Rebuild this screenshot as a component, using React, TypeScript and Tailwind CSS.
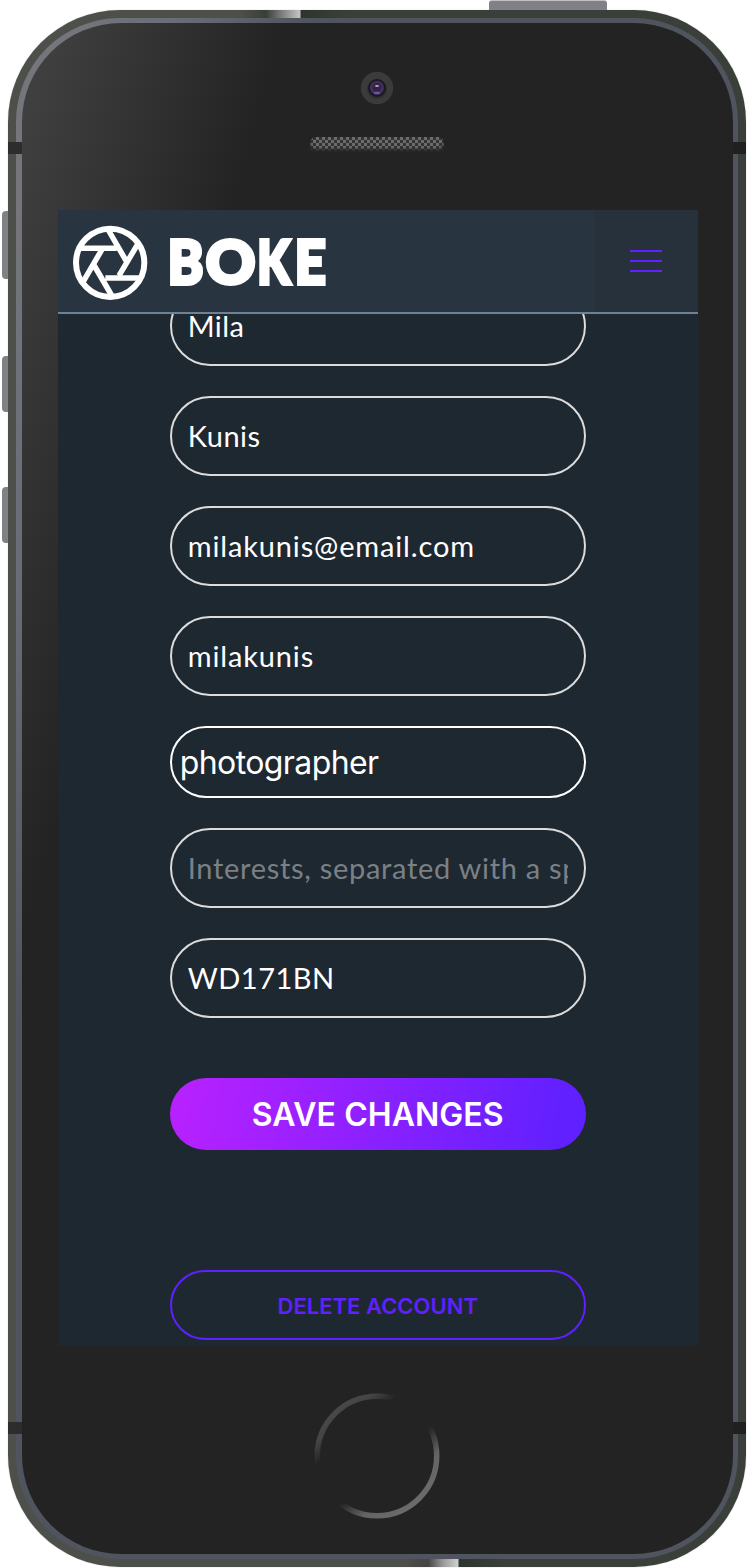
import React from "react";

function Logo() {
  return (
    <svg viewBox="24 30 840 306" className="h-[102px] w-[280px] shrink-0" aria-label="Boke">
      <g fill="none" stroke="#fff" strokeWidth="18">
        <circle cx="180.500" cy="188.500" r="102.500" />
        <path strokeWidth="16.500" d="M92 144.500H200M175 90L231 187M264 131L207 227M270 234H166M186 288L130 192M98 248L156 148" />
      </g>
      <g fill="#fff" stroke="#fff" strokeWidth="12" fontFamily="Lato, sans-serif" fontWeight="900" fontSize="183">
        <text x="353" y="252" textLength="107" lengthAdjust="spacingAndGlyphs">B</text>
        <text x="467" y="252" textLength="149" lengthAdjust="spacingAndGlyphs">O</text>
        <text x="622" y="252" textLength="99" lengthAdjust="spacingAndGlyphs">K</text>
        <text x="734" y="252" textLength="93" lengthAdjust="spacingAndGlyphs">E</text>
      </g>
    </svg>
  );
}

function Header() {
  return (
    <header className="relative z-10 flex h-[104px] shrink-0 items-center justify-between border-b-2 border-[#6f8294] bg-[linear-gradient(90deg,#28343f_0,#28343f_536px,#26313c_536px)] pr-9">
      <Logo />
      <button className="flex h-[22px] w-8 flex-col justify-between" aria-label="Menu">
        <span className="h-0.5 w-full bg-[#6020ff]" />
        <span className="h-0.5 w-full bg-[#6020ff]" />
        <span className="h-0.5 w-full bg-[#6020ff]" />
      </button>
    </header>
  );
}

function Field({ text, track, muted }: { text: string; track: string; muted?: boolean }) {
  return (
    <div className="flex h-20 shrink-0 items-center rounded-full border-2 border-[#dcdcdc] px-4 pb-px">
      <span
        className={`w-full overflow-hidden whitespace-nowrap font-[Lato,sans-serif] text-[29px] leading-10 ${track} ${muted ? "text-[#7b8085]" : "text-white"}`}
      >
        {text}
      </span>
    </div>
  );
}

function ProfileForm() {
  return (
    <main className="flex-1 overflow-hidden px-28">
      <form className="-mt-7 flex flex-col gap-[30px]">
        <Field text="Mila" track="tracking-[0.4px]" />
        <Field text="Kunis" track="tracking-[0.5px]" />
        <Field text="milakunis@email.com" track="tracking-[0.85px]" />
        <Field text="milakunis" track="tracking-[0.85px]" />
        <div className="flex h-[72px] items-center rounded-full border-2 border-white px-2 pt-0.5 font-[Inter,sans-serif] text-[32px] tracking-[-0.6px] text-white">
          photographer
        </div>
        <Field text="Interests, separated with a space" track="tracking-[0.7px]" muted />
        <Field text="WD171BN" track="tracking-[0.5px]" />
        <button
          type="button"
          className="mt-[30px] h-[72px] rounded-full bg-[linear-gradient(100deg,#b721ff_3%,#6020ff_95%)] pt-0.5 font-[Inter,sans-serif] text-[32px] font-semibold tracking-[0.05px] text-white"
        >
          SAVE CHANGES
        </button>
        <button
          type="button"
          className="mt-[90px] h-[70px] rounded-full border-2 border-[#6020ff] pt-0.5 font-[Inter,sans-serif] text-[22px] font-semibold tracking-[0.02px] text-[#6020ff]"
        >
          DELETE ACCOUNT
        </button>
      </form>
    </main>
  );
}

function Camera() {
  return (
    <svg viewBox="0 0 34 34" className="h-[34px] w-[34px]">
      <defs>
        <radialGradient id="lens" cx="50%" cy="45%" r="55%">
          <stop offset="0" stopColor="#2b2038" />
          <stop offset="0.5" stopColor="#35254b" />
          <stop offset="0.8" stopColor="#49326b" />
          <stop offset="1" stopColor="#2c2040" />
        </radialGradient>
      </defs>
      <circle cx="17" cy="17" r="16.200" fill="#3b3b3b" />
      <circle cx="17" cy="18" r="10" fill="#303030" />
      <circle cx="17" cy="17" r="9" fill="#1c1a20" />
      <circle cx="17" cy="17" r="7" fill="url(#lens)" />
      <ellipse cx="17" cy="22" rx="3.200" ry="1.300" fill="#70559a" />
      <ellipse cx="17" cy="15" rx="2" ry="1" fill="#b5a9c2" />
    </svg>
  );
}

function HomeButton() {
  return (
    <svg viewBox="0 0 126 126" className="h-[126px] w-[126px]">
      <defs>
        <linearGradient id="home" gradientUnits="userSpaceOnUse" x1="22.700" y1="15.900" x2="103.300" y2="110.100">
          <stop offset="0" stopColor="#484848" />
          <stop offset="0.1" stopColor="#444444" />
          <stop offset="0.24" stopColor="#232323" />
          <stop offset="0.6" stopColor="#232323" />
          <stop offset="0.8" stopColor="#646464" />
          <stop offset="1" stopColor="#6b6b6b" />
        </linearGradient>
      </defs>
      <circle cx="63" cy="63" r="59.700" fill="none" stroke="url(#home)" strokeWidth="5.500" />
    </svg>
  );
}

export default function App() {
  return (
    <div className="relative h-[1568px] w-[748px] overflow-hidden bg-white pl-2 pt-2.5">
      <div className="absolute left-[489px] top-0 h-4 w-[118px] rounded-t-[3px] border-t border-[#c2c2c2] bg-[#818087]" />
      <div className="absolute left-[1.500px] top-[210.500px] h-[68px] w-3 rounded-l-[4px] bg-[#818087]" />
      <div className="absolute left-[1.500px] top-[356px] h-[56px] w-3 rounded-l-[4px] bg-[#818087]" />
      <div className="absolute left-[1.500px] top-[487px] h-[56px] w-3 rounded-l-[4px] bg-[#818087]" />

      <div className="relative h-[1557px] w-[738px] rounded-[112px] bg-[linear-gradient(90deg,#4d4f4a_0,#4d4f4a_232px,#3a3e39_258px,#777_272px,#c4c4c4_292px,#2d352d_293px,#3a3f3a_340px),linear-gradient(90deg,#4d4f4a_0,#4d4f4a_398px,#444_420px,#999_435px,#d0d0d4_450px,#2d352d_451px,#3a3f3a_498px)] bg-[length:100%_50%,100%_51%] bg-[position:top,bottom] bg-no-repeat p-2 shadow-[0_0_1px_#999]">
        <div className="h-full rounded-[104px] bg-[linear-gradient(106deg,#74767c_5%,#6a6c76_14%,#50545e_25%)] pb-[5px] pl-[5.5px] pr-[5px] pt-[5px]">
          <div className="flex h-full flex-col items-center rounded-[99px] bg-[linear-gradient(106deg,#3f3f3f_3%,#232323_23%)] pl-px">
            <div className="flex h-[187px] w-full shrink-0 flex-col items-center pr-px pt-[47.500px]">
              <Camera />
              <div className="mt-8 h-[15px] w-[134px] rounded-[6px] bg-[conic-gradient(#333_25%,#6c6c6c_0_50%,#333_0_75%,#6c6c6c_0)] bg-[length:6px_6px] shadow-[inset_0_-3px_3px_#252525]" />
            </div>
            <div className="flex h-[1136px] w-[640px] shrink-0 flex-col overflow-hidden bg-[#1e2831]">
              <Header />
              <ProfileForm />
            </div>
            <div className="flex flex-1 items-start pr-px pt-[47px]">
              <HomeButton />
            </div>
          </div>
        </div>
        <div className="absolute left-0 top-[132px] h-3 w-[13.500px] bg-[#2d2d2d]" />
        <div className="absolute left-0 top-[1412px] h-3 w-[13.500px] bg-[#2d2d2d]" />
        <div className="absolute right-0 top-[132px] h-3 w-[13px] bg-[#202020]" />
        <div className="absolute right-0 top-[1412px] h-3 w-[13px] bg-[#202020]" />
      </div>
    </div>
  );
}
